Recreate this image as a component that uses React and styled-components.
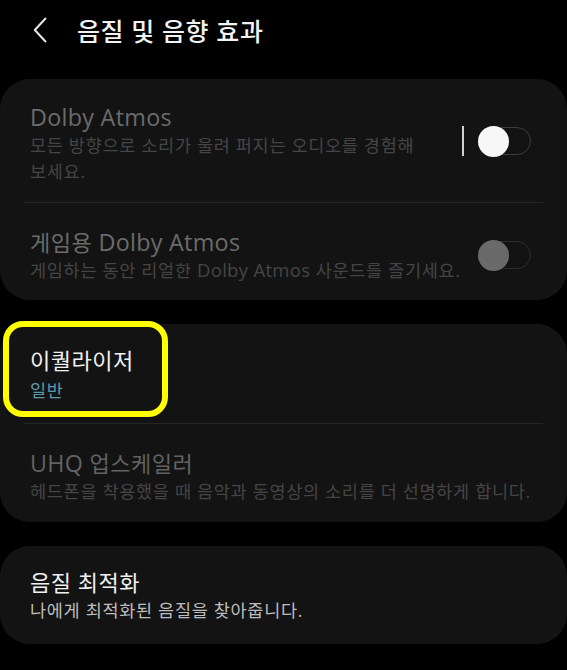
import React from "react";
import styled, { createGlobalStyle } from "styled-components";

const GlobalStyle = createGlobalStyle`
  html, body {
    margin: 0;
    padding: 0;
    background: #000;
  }
  body {
    font-family: "Open Sans", "Noto Sans CJK KR", sans-serif;
    -webkit-font-smoothing: antialiased;
  }
`;

const Screen = styled.div`
  width: 567px;
  height: 670px;
  background: #000;
  overflow: hidden;
`;

const Header = styled.header`
  display: flex;
  align-items: center;
  height: 60px;
  padding: 0 0 0 30px;
  margin-bottom: 19px;
`;

const Back = styled.button`
  display: flex;
  align-items: center;
  justify-content: center;
  width: 20px;
  height: 30px;
  padding: 0;
  margin-right: 27px;
  border: 0;
  background: none;
  color: #e6e6e6;
`;

const HeaderTitle = styled.h1`
  margin: 0;
  font-size: 25px;
  font-weight: 500;
  letter-spacing: 0.6px;
  color: #f2f2f2;
`;

const List = styled.div`
  display: flex;
  flex-direction: column;
  gap: 24px;
`;

const Card = styled.section`
  background: #131313;
  border-radius: 30px;
`;

const Row = styled.div`
  position: relative;
  display: flex;
  align-items: center;
  padding: ${(p) => p.$pad || "24px 30px 18px 30px"};
`;

const Divider = styled.div`
  height: 1px;
  margin: 0 24px;
  background: #262626;
`;

const Text = styled.div`
  flex: 1 1 auto;
  min-width: 0;
  max-width: ${(p) => p.$max || "none"};
`;

const Title = styled.div`
  font-size: 22px;
  line-height: 30px;
  letter-spacing: 0.5px;
  color: ${(p) => p.$color || "#f0f0f0"};
`;

const Sub = styled.div`
  margin-top: ${(p) => p.$gap || "0"};
  font-size: 17.5px;
  line-height: 26px;
  letter-spacing: 0.7px;
  word-break: keep-all;
  color: ${(p) => p.$color || "#bdbdbd"};
`;

const Latin = styled.span`
  font-size: 1.06em;
  letter-spacing: 0.3px;
`;

const SwitchWrap = styled.div`
  display: flex;
  flex: none;
  align-items: center;
  gap: 15px;
  margin-left: auto;
  margin-top: ${(p) => p.$shift || "0"};
  padding-left: 8px;
`;

const Bar = styled.div`
  width: 2px;
  height: 30px;
  background: #d0d0d0;
`;

const Track = styled.div`
  position: relative;
  width: 50px;
  height: 26px;
  border: 1.5px solid ${(p) => (p.$dim ? "#2c2c2c" : "#3c3c3c")};
  border-radius: 15px;
`;

const Thumb = styled.div`
  position: absolute;
  left: -2px;
  top: 50%;
  width: 31px;
  height: 31px;
  margin-top: -15.5px;
  border-radius: 50%;
  background: ${(p) => (p.$dim ? "#6a6a6a" : "#f7f7f7")};
`;

const Highlight = styled.div`
  position: absolute;
  left: 3px;
  top: -3px;
  width: 165px;
  height: 96px;
  box-sizing: border-box;
  border: 6px solid #ffff00;
  border-radius: 20px;
  pointer-events: none;
`;

function Toggle({ dim, bar, shift }) {
  return (
    <SwitchWrap $shift={shift}>
      {bar && <Bar />}
      <Track $dim={dim}>
        <Thumb $dim={dim} />
      </Track>
    </SwitchWrap>
  );
}

export default function App() {
  return (
    <Screen>
      <GlobalStyle />
      <Header>
        <Back aria-label="back">
          <svg width="14" height="26" viewBox="0 0 14 26" fill="none">
            <path
              d="M12.5 1.5 L1.8 13 L12.5 24.5"
              stroke="currentColor"
              strokeWidth="2"
              strokeLinecap="round"
              strokeLinejoin="round"
            />
          </svg>
        </Back>
        <HeaderTitle>음질 및 음향 효과</HeaderTitle>
      </Header>

      <List>
        <Card>
          <Row $pad="23px 36px 18px 30px">
            <Text $max="400px">
              <Title $color="#6b6b6b">
                <Latin>Dolby Atmos</Latin>
              </Title>
              <Sub $color="#454545">
                모든 방향으로 소리가 울려 퍼지는 오디오를 경험해 보세요.
              </Sub>
            </Text>
            <Toggle bar shift="-4px" />
          </Row>
          <Divider />
          <Row $pad="24px 36px 17px 30px">
            <Text>
              <Title $color="#6b6b6b">
                게임용 <Latin>Dolby Atmos</Latin>
              </Title>
              <Sub $color="#454545">
                게임하는 동안 리얼한 <Latin>Dolby Atmos</Latin> 사운드를 즐기세요.
              </Sub>
            </Text>
            <Toggle dim />
          </Row>
        </Card>

        <Card>
          <Row $pad="21px 30px 20px 30px">
            <Text>
              <Title>이퀄라이저</Title>
              <Sub $color="#5f98ad" $gap="2px">
                일반
              </Sub>
            </Text>
            <Highlight />
          </Row>
          <Divider />
          <Row>
            <Text>
              <Title $color="#626262">
                <Latin>UHQ</Latin> 업스케일러
              </Title>
              <Sub $color="#454545">
                헤드폰을 착용했을 때 음악과 동영상의 소리를 더 선명하게 합니다.
              </Sub>
            </Text>
          </Row>
        </Card>

        <Card>
          <Row $pad="21px 30px 21px 30px">
            <Text>
              <Title>음질 최적화</Title>
              <Sub>나에게 최적화된 음질을 찾아줍니다.</Sub>
            </Text>
          </Row>
        </Card>
      </List>
    </Screen>
  );
}
